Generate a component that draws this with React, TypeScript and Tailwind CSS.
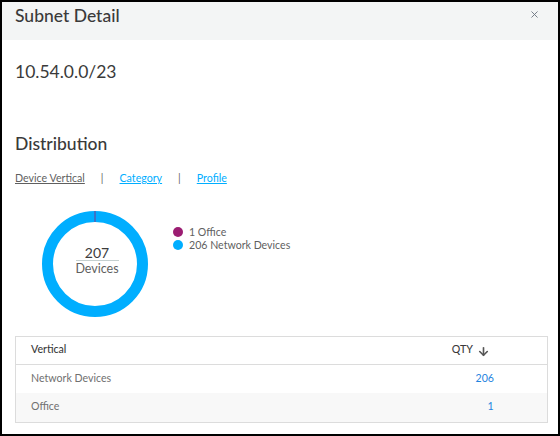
import { ArrowDown, X } from "lucide-react";

function Donut() {
  return (
    <div className="relative h-[106px] w-[106px] shrink-0">
      <svg viewBox="0 0 106 106" className="h-full w-full">
        <circle cx="53" cy="53" r="47.5" fill="none" stroke="#00aeff" strokeWidth="11" />
        <line x1="53" y1="0" x2="53" y2="11" stroke="#9b1d72" strokeWidth="0.8" />
      </svg>
      <div className="absolute inset-0 ml-[5px] mb-[8px] flex flex-col items-center justify-center">
        <div className="w-[43px] border-b border-[#c5d0d0] text-center text-[14px] leading-[15px] text-[#3c3c3c]">
          207
        </div>
        <div className="text-[12.5px] leading-[15px] text-[#5f5f5f]">Devices</div>
      </div>
    </div>
  );
}

export default function App() {
  return (
    <div className="h-[436px] w-[560px] overflow-hidden border-x-2 border-t-2 border-b-[2px] border-black bg-white font-['Lato',sans-serif] text-[#333]">
      <div className="flex h-[38px] items-start justify-between bg-[#f3f5f5] pl-[13px] pr-[18px]">
        <h1 className="text-[17.5px] leading-[28px] font-medium text-[#3a3a3a]">Subnet Detail</h1>
        <X className="mt-[7px] h-[11px] w-[11px] text-[#6b7480]" strokeWidth={2} />
      </div>
      <div className="px-[13px]">
        <div className="mt-[21px] text-[17.5px] leading-[22px] text-[#3a3a3a]">10.54.0.0/23</div>
        <h2 className="mt-[49px] text-[17.5px] leading-[24px] font-medium text-[#3a3a3a]">Distribution</h2>
        <div className="mt-[14px] flex items-center text-[10.65px] leading-[16px]">
          <a className="text-[#5f5f5f] underline">Device Vertical</a>
          <span className="ml-[16px] text-[#5f5f5f]">|</span>
          <a className="ml-[16px] text-[#00aeff] underline">Category</a>
          <span className="ml-[16px] text-[#5f5f5f]">|</span>
          <a className="ml-[16px] text-[#00aeff] underline">Profile</a>
        </div>
        <div className="mt-[25px] flex pl-[26.5px]">
          <Donut />
          <div className="ml-[25px] mt-[14.5px] text-[10.6px] leading-[13px] text-[#5f5f5f]">
            <div className="flex items-center gap-[6.5px]">
              <span className="h-[10px] w-[10px] rounded-full bg-[#9b1d72]" />
              <span>1 Office</span>
            </div>
            <div className="flex items-center gap-[6.5px]">
              <span className="h-[10px] w-[10px] rounded-full bg-[#00aeff]" />
              <span>206 Network Devices</span>
            </div>
          </div>
        </div>
        <div className="mt-[19px] w-[533px] border border-[#dcdcdc] text-[10.6px]">
          <div className="flex h-[28px] items-center justify-between border-b border-[#dcdcdc] pb-[1px] pl-[15px] pr-[57px] font-medium text-[#3a3a3a]">
            <span>Vertical</span>
            <span className="flex items-center gap-[4px]">
              QTY
              <ArrowDown className="mt-[3px] h-[13px] w-[13px] text-[#555]" strokeWidth={3} />
            </span>
          </div>
          <div className="flex h-[28px] items-center justify-between pl-[15px] pr-[53px] text-[#707070]">
            <span>Network Devices</span>
            <span className="text-[#1f84e0]">206</span>
          </div>
          <div className="flex h-[29px] items-center justify-between bg-[#f8f8f8] pb-[1px] pl-[15px] pr-[53.4px] text-[#707070]">
            <span>Office</span>
            <span className="text-[#1f84e0]">1</span>
          </div>
        </div>
      </div>
    </div>
  );
}
